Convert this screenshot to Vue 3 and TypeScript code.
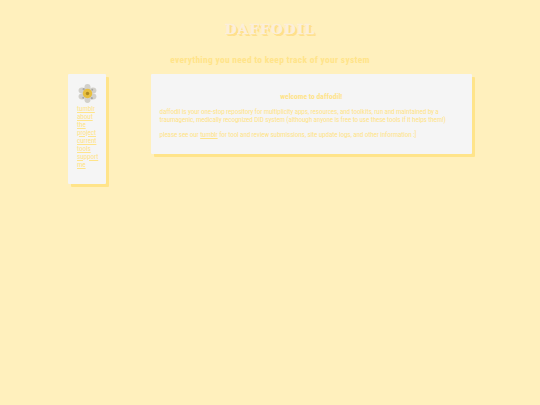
<script setup lang="ts">
const links: string[] = ['tumblr', 'about', 'the', 'project', 'current', 'tools', 'support', 'me']
</script>

<template>
  <div class="page">
    <h1 class="title">DAFFODIL</h1>
    <h2 class="tagline">everything you need to keep track of your system</h2>
    <div class="columns">
      <nav class="side card">
        <svg class="flower" viewBox="0 0 20 20" width="19" height="19" aria-hidden="true">
          <g fill="#d2d0ca">
            <ellipse cx="10" cy="3.6" rx="3.2" ry="3.6" />
            <ellipse cx="10" cy="16.4" rx="3.2" ry="3.6" />
            <ellipse cx="4.2" cy="6.8" rx="3.6" ry="3.2" />
            <ellipse cx="15.8" cy="6.8" rx="3.6" ry="3.2" />
            <ellipse cx="4.2" cy="13.2" rx="3.6" ry="3.2" />
            <ellipse cx="15.8" cy="13.2" rx="3.6" ry="3.2" />
          </g>
          <g fill="#8f8c86" opacity="0.6">
            <circle cx="6" cy="5.5" r="1.2" />
            <circle cx="14.5" cy="15" r="1.2" />
            <circle cx="15" cy="6" r="1" />
            <circle cx="5.5" cy="14.5" r="1" />
          </g>
          <circle cx="10" cy="10" r="5" fill="#e8bf3e" />
          <circle cx="10" cy="10" r="1.8" fill="#b08a22" />
        </svg>
        <a v-for="l in links" :key="l" class="link" href="#">{{ l }}</a>
      </nav>
      <main class="main card">
        <h3 class="welcome">welcome to daffodil!</h3>
        <p class="para">daffodil is your one-stop repository for multiplicity apps, resources, and toolkits, run and maintained by a<br />traumagenic, medically recognized DID system (although anyone is free to use these tools if it helps them!)</p>
        <p class="para">please see our <a class="inline" href="#">tumblr</a> for tool and review submissions, site update logs, and other information :]</p>
      </main>
    </div>
  </div>
</template>

<style>
html, body { margin: 0; background: #fff0bd; }
</style>

<style scoped>
.page {
  width: 540px;
  height: 405px;
  box-sizing: border-box;
  overflow: hidden;
  background: #fff0bd;
  color: #ffe48a;
  font-family: "Liberation Sans Narrow", "Roboto Condensed", Roboto, sans-serif;
  font-stretch: condensed;
  padding-top: 20px;
}
.title {
  margin: 0;
  text-align: center;
  font: 900 13.5px/18px "DejaVu Serif", serif;
  letter-spacing: 1.2px;
  color: #fbeedb;
  -webkit-text-stroke: 0.4px #fbeedb;
  text-shadow: 1px 1px 0 #ffe08a, 2px 2px 0 #ffe08a;
}
.tagline {
  margin: 15px 0 0;
  text-align: center;
  font-size: 9.5px;
  line-height: 14px;
  font-weight: 700;
  letter-spacing: 0.27px;
}
.columns {
  display: flex;
  align-items: flex-start;
  gap: 44.5px;
  margin: 7px 0 0 68px;
}
.card {
  background: #f5f5f5;
  box-shadow: 3px 3px 0 #ffe48a;
  border-radius: 1px;
}
.side {
  width: 38px;
  height: 110px;
  box-sizing: border-box;
  padding: 10px 0 0 9px;
  display: flex;
  flex-direction: column;
  font-size: 7.2px;
  line-height: 8px;
  letter-spacing: -0.1px;
}
.flower { margin: 0 0 1.5px 0.5px; }
.link { color: #ffe48a; text-decoration: underline; }
.main {
  width: 321.5px;
  height: 80px;
  box-sizing: border-box;
  padding: 18px 9px 0;
  font-size: 7.2px;
  line-height: 8px;
  letter-spacing: -0.15px;
}
.welcome {
  margin: 0 0 7px;
  text-align: center;
  font-size: 7.6px;
  line-height: 9px;
  font-weight: 700;
  letter-spacing: 0;
}
.para { margin: 0 0 7px; white-space: nowrap; }
.inline { color: #ffe48a; text-decoration: underline; }
</style>
